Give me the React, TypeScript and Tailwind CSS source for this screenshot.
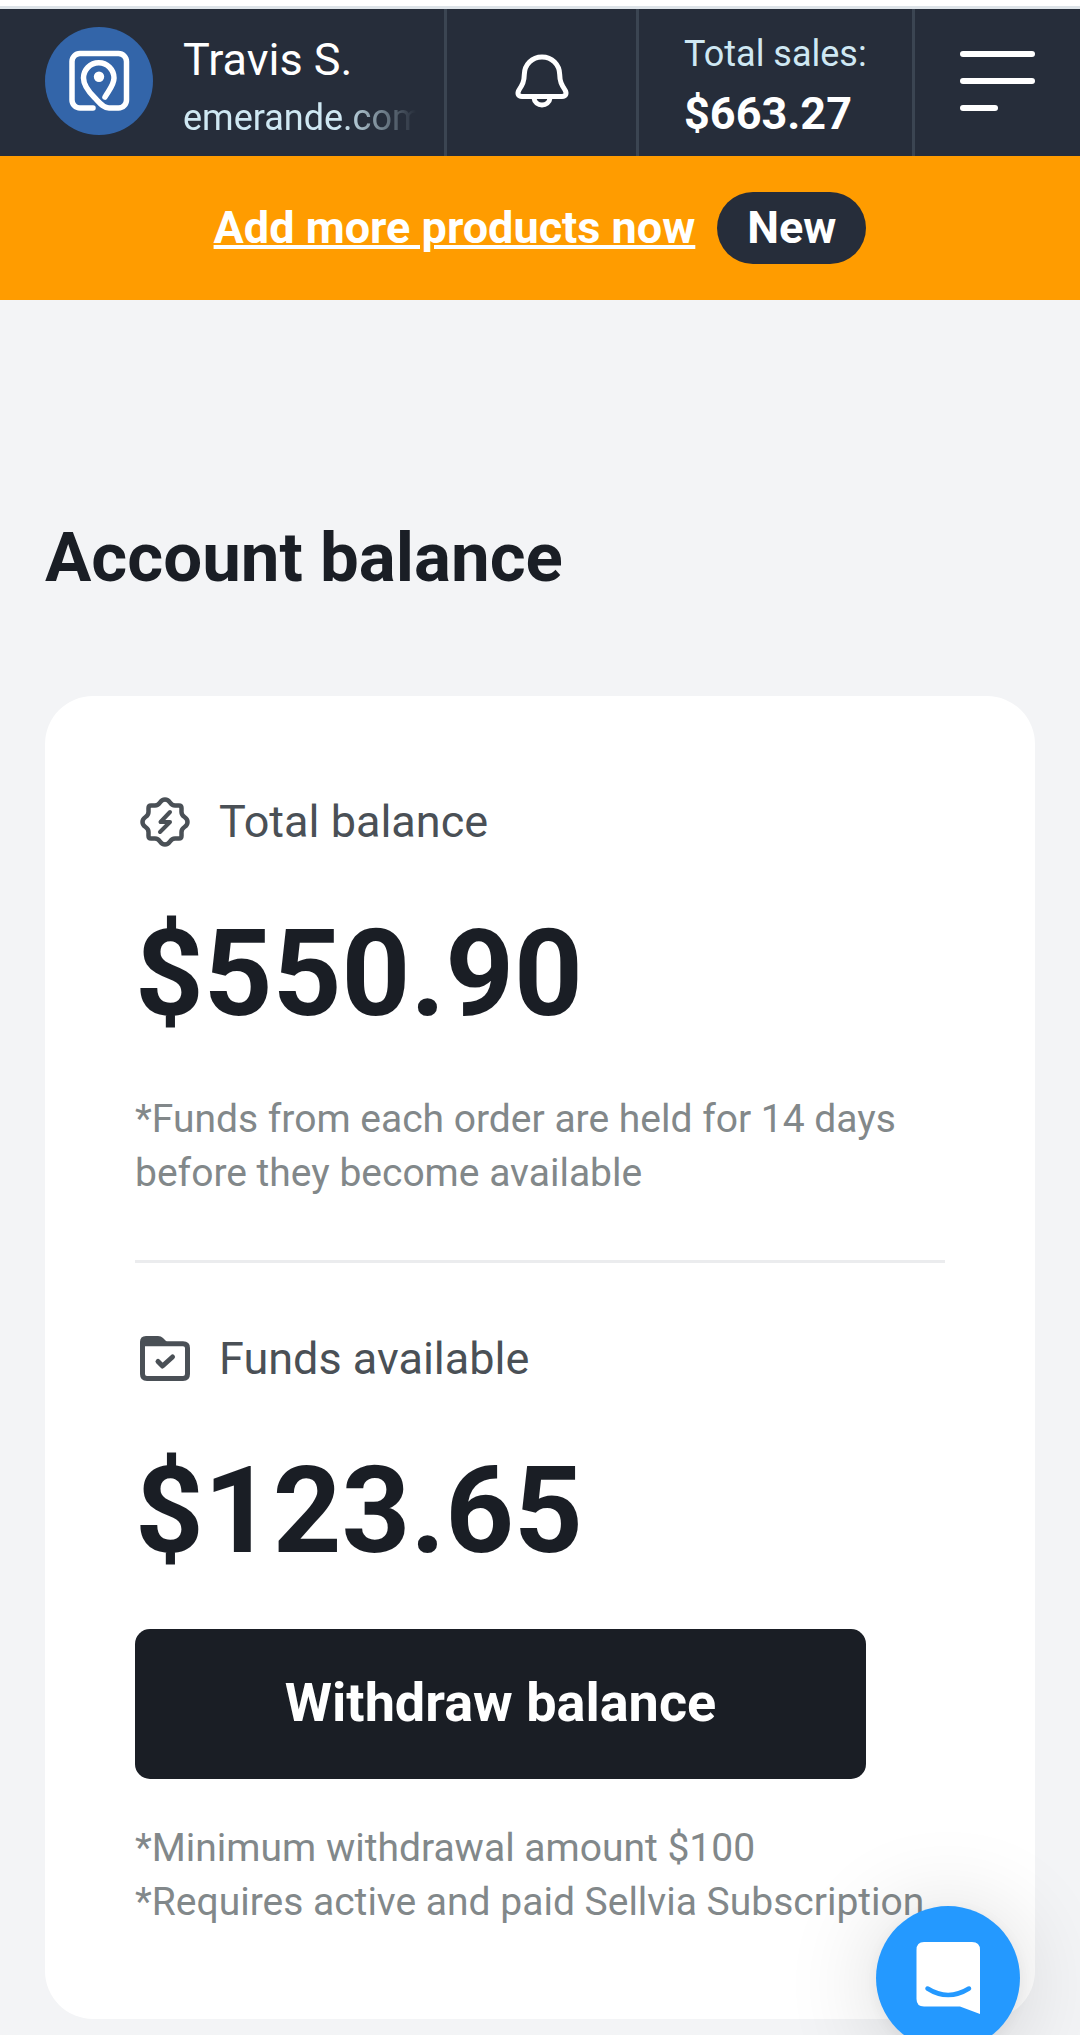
import type { ReactNode } from 'react';

function StoreLogo() {
    return (
        <svg viewBox="0 0 108 108" className="size-27 shrink-0 rounded-full bg-[#3365a9]" fill="none" aria-hidden="true">
            <path
                d="M48 81H35a8 8 0 0 1-8-8V34.500a8 8 0 0 1 8-8h38.500a8 8 0 0 1 8 8V73a8 8 0 0 1-8 8H64C58 81 54 75 49.500 70.500C43 64 38.500 58 38.500 51a15.250 15.250 0 0 1 30.500 0C69 58 64 63 60 70"
                stroke="#fff"
                strokeWidth="5.500"
                strokeLinecap="round"
                strokeLinejoin="round"
            />
            <circle cx="54" cy="49.700" r="5.200" fill="#fff" />
        </svg>
    );
}

function BellIcon() {
    return (
        <svg viewBox="1.500 2.500 80 80" className="size-20" fill="none" stroke="#fff" strokeWidth="5" strokeLinecap="round" strokeLinejoin="round" aria-hidden="true">
            <path d="M41.500 16.500C31.500 16.500 24 24 23.800 34C23.700 41 22 44 18.500 49.500C16.500 53 17.500 56 21.500 56H61.500C65.500 56 66.500 53 64.500 49.500C61 44 59.300 41 59.200 34C59 24 51.500 16.500 41.500 16.500Z" />
            <path d="M33.500 57.500C34 62 37.500 64.500 41.500 64.500S49 62 49.500 57.500" />
        </svg>
    );
}

function MenuIcon() {
    return (
        <svg viewBox="0 0 75 60" className="h-15 w-[75px]" fill="#fff" aria-hidden="true">
            <rect width="75" height="6" rx="3" />
            <rect y="27" width="75" height="6" rx="3" />
            <rect y="54" width="38" height="6" rx="3" />
        </svg>
    );
}

function BalanceIcon() {
    return (
        <svg viewBox="-30 -30 60 60" className="size-15" fill="none" stroke="#4a5056" strokeWidth="4.500" strokeLinecap="round" strokeLinejoin="round" aria-hidden="true">
            <path d="M0-22.500Q3-22.500 5-19.500Q7-16.500 10-16.500H14Q16.500-16.500 16.500-14V-10Q16.500-7 19.500-5Q22.500-3 22.500 0Q22.500 3 19.500 5Q16.500 7 16.500 10V14Q16.500 16.500 14 16.500H10Q7 16.500 5 19.500Q3 22.500 0 22.500Q-3 22.500-5 19.500Q-7 16.500-10 16.500H-14Q-16.500 16.500-16.500 14V10Q-16.500 7-19.500 5Q-22.500 3-22.500 0Q-22.500-3-19.500-5Q-16.500-7-16.500-10V-14Q-16.500-16.500-14-16.500H-10Q-7-16.500-5-19.500Q-3-22.500 0-22.500Z" />
            <path d="M5-10L-4.500 0H5L-5 10" strokeWidth="4" />
        </svg>
    );
}

function FundsIcon() {
    return (
        <svg viewBox="5 9 60 60" className="size-15" fill="none" stroke="#4a5056" strokeWidth="5" strokeLinecap="round" strokeLinejoin="round" aria-hidden="true">
            <path d="M10 25V22Q10 16 16 16H28Q31 16 33 18L37 22V26H10Z" fill="#4a5056" stroke="none" />
            <path d="M12.500 23.800H53Q57.500 23.800 57.500 28V54Q57.500 58.500 53 58.500H17Q12.500 58.500 12.500 54Z" />
            <path d="M28 41.500L32.500 46L42.500 37" />
        </svg>
    );
}

interface BalanceProps {
    icon: ReactNode;
    label: string;
    amount: string;
}

function Balance({ icon, label, amount }: BalanceProps) {
    return (
        <>
            <div className="flex items-center gap-6">
                {icon}
                <h2 className="text-[45px] leading-[54px] text-[#4a5056]">{label}</h2>
            </div>
            <p className="mt-[62px] text-[120px] leading-[120px] font-bold text-[#1a1e25]">{amount}</p>
        </>
    );
}

export default function App() {
    return (
        <div className="min-h-screen bg-[#f3f4f6] pb-4 font-['Roboto',sans-serif]">
            <div className="h-[9px] border-b-3 border-[#dde3e8] bg-white" />

            <header className="flex h-[147px] bg-[#262d3a] text-white">
                <div className="flex min-w-0 flex-1 border-r-3 border-[#3b4552] pr-7 pl-[45px]">
                    <div className="flex shrink-0 items-center pb-[3px]">
                        <StoreLogo />
                    </div>
                    <div className="ml-[30px] flex min-w-0 flex-1 flex-col gap-2.5 pt-6">
                        <span className="truncate text-[45px] leading-[54px]">Travis S.</span>
                        <a
                            href="#store"
                            className="overflow-hidden text-[36px] leading-[42px] whitespace-nowrap text-[#cfe8f3] [mask-image:linear-gradient(to_right,#000_68%,transparent)]"
                        >
                            emerande.com
                        </a>
                    </div>
                </div>
                <button type="button" aria-label="Notifications" className="flex w-48 shrink-0 items-center justify-center border-r-3 border-[#3b4552]">
                    <BellIcon />
                </button>
                <div className="flex w-[276px] shrink-0 flex-col gap-3 border-r-3 border-[#3b4552] pt-6 pl-[45px]">
                    <span className="text-[36px] leading-[42px] text-[#cfe8f3]">Total sales:</span>
                    <span className="text-[45px] leading-[54px] font-bold">$663.27</span>
                </div>
                <button type="button" aria-label="Menu" className="flex w-[165px] shrink-0 items-center pb-[3px] pl-[45px]">
                    <MenuIcon />
                </button>
            </header>

            <div className="flex h-36 items-center justify-center gap-[22px] bg-[#ff9c00] text-[45px] leading-[54px] font-bold text-white">
                <a href="#products" className="underline decoration-4">Add more products now</a>
                <span className="flex h-18 items-center rounded-full bg-[#262d3a] px-[30px]">New</span>
            </div>

            <main className="px-[45px] pt-54">
                <h1 className="text-[69px] leading-[84px] font-bold text-[#1a1e25]">Account balance</h1>

                <section className="mt-24 rounded-[48px] bg-white px-[90px] pt-24 pb-[90px]">
                    <Balance icon={<BalanceIcon />} label="Total balance" amount="$550.90" />
                    <p className="mt-[58px] text-[39px] leading-[54px] text-[#82888a]">
                        *Funds from each order are held for 14 days before they become available
                    </p>

                    <hr className="mt-[60px] mb-[66px] border-t-3 border-[#ebecee]" />

                    <Balance icon={<FundsIcon />} label="Funds available" amount="$123.65" />
                    <button
                        type="button"
                        className="mt-[58px] block h-[150px] w-[731px] max-w-full rounded-[15px] bg-[#1a1e25] pb-0.5 text-[54px] leading-[66px] font-bold text-white"
                    >
                        Withdraw balance
                    </button>
                    <p className="mt-[42px] text-[39px] leading-[54px] text-[#82888a]">
                        *Minimum withdrawal amount $100
                        <br />
                        *Requires active and paid Sellvia Subscription
                    </p>
                </section>
            </main>

            <button
                type="button"
                aria-label="Open chat"
                className="fixed right-[60px] bottom-[-15px] size-36 rounded-full bg-[#2499ff] shadow-[0_3px_18px_rgba(0,0,0,0.06),0_6px_96px_rgba(0,0,0,0.16)]"
            >
                <svg viewBox="0 0 144 144" className="size-36" aria-hidden="true">
                    <path d="M48 36H96Q104 36 104 44V108L84 100.500H48Q40.500 100.500 40.500 93V44Q40.500 36 48 36Z" fill="#fff" />
                    <path d="M51.500 82.500Q72 95.500 93 82.500" fill="none" stroke="#2499ff" strokeWidth="4.500" strokeLinecap="round" />
                </svg>
            </button>
        </div>
    );
}
